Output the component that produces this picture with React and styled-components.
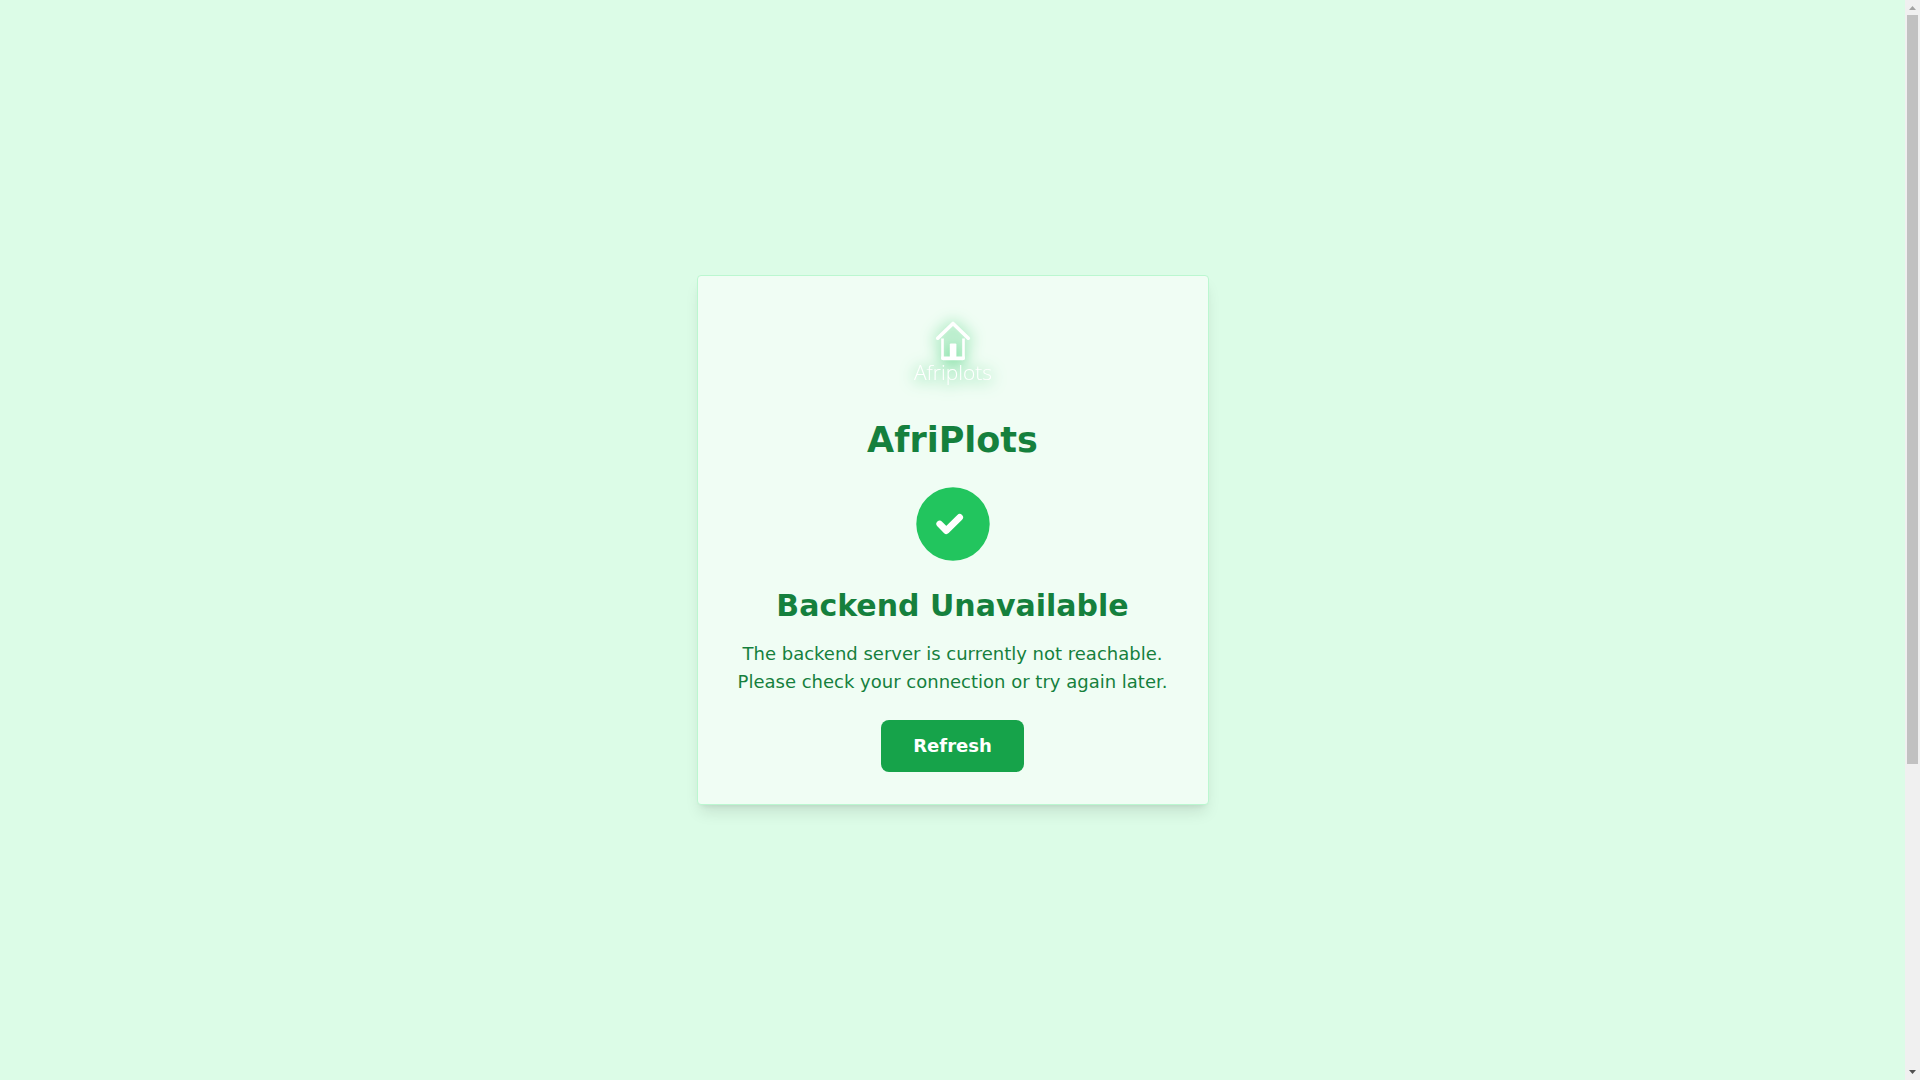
import React from 'react';
import styled, { createGlobalStyle } from 'styled-components';

const GlobalStyle = createGlobalStyle`
  * {
    box-sizing: border-box;
    margin: 0;
    padding: 0;
  }
  body {
    font-family: 'DejaVu Sans', sans-serif;
    background-color: #dcfce7;
    color: #15803d;
  }
`;

const PageStyles = styled.div`
  display: flex;
  min-height: 100vh;

  .page__screen {
    flex: 1;
    display: flex;
    align-items: center;
    justify-content: center;
  }
`;

const Scrollbar = styled.div`
  width: 15px;
  height: 100vh;
  display: flex;
  flex-direction: column;
  align-items: center;
  background-color: #f0f0f0;

  svg {
    width: 15px;
    height: 15px;
    flex-shrink: 0;
  }
  .scrollbar__track {
    flex: 1;
    width: 11px;
  }
  .scrollbar__thumb {
    height: 71.3%;
    background-color: #c1c1c1;
  }
`;

const Card = styled.main`
  width: 100%;
  max-width: 512px;
  padding: 32px;
  display: flex;
  flex-direction: column;
  align-items: center;
  text-align: center;
  background-color: #f0fdf4;
  border: 1px solid #bbf7d0;
  border-radius: 4px;
  box-shadow: 0 10px 15px -3px rgba(0, 0, 0, 0.1),
    0 4px 6px -4px rgba(0, 0, 0, 0.1);
`;

const Logo = styled.svg`
  width: 96px;
  height: 96px;
  margin-bottom: 16px;
  filter: drop-shadow(0 2px 8px #22c55e);
`;

const Title = styled.h1`
  font-size: 35px;
  line-height: 40px;
  font-weight: 700;
  margin-bottom: 24px;
`;

const StatusIcon = styled.svg`
  width: 80px;
  height: 80px;
  margin-bottom: 24px;
`;

const Heading = styled.h2`
  font-size: 30px;
  line-height: 36px;
  font-weight: 700;
  margin-bottom: 16px;
`;

const Message = styled.p`
  font-size: 18px;
  line-height: 28px;
  margin-bottom: 24px;
`;

const Button = styled.button`
  padding: 12px 32px;
  font-family: inherit;
  font-size: 18px;
  line-height: 28px;
  font-weight: 700;
  color: #fff;
  background-color: #16a34a;
  border: none;
  border-radius: 8px;
  cursor: pointer;
  &:hover {
    background-color: #15803d;
  }
`;

export default function App() {
  return (
    <>
      <GlobalStyle />
      <PageStyles>
        <div className="page__screen">
          <Card>
            <Logo viewBox="0 0 96 96" role="img" aria-label="Afriplots">
              <g fill="none" stroke="#fff" strokeLinejoin="round">
                <path
                  d="M32.7 30.2L48 15.5l15.3 14.7"
                  strokeWidth="3.6"
                  strokeLinecap="round"
                />
                <path d="M37.5 30.5v20h21v-20" strokeWidth="2.6" />
              </g>
              <path
                d="M36.2 48.5h23.6v1.8a2 2 0 0 1-2 2H38.2a2 2 0 0 1-2-2z"
                fill="#fff"
              />
              <rect x="44.8" y="35.5" width="6.6" height="15" rx="1" fill="#fff" />
              <text
                x="48"
                y="72"
                textAnchor="middle"
                fontFamily="'Open Sans', sans-serif"
                fontWeight="300"
                fontSize="21"
                fill="#fff"
              >
                Afriplots
              </text>
            </Logo>
            <Title>AfriPlots</Title>
            <StatusIcon viewBox="0 0 80 80" aria-hidden="true">
              <circle cx="40" cy="40" r="36.7" fill="#22c55e" />
              <path
                d="M26.7 40l6.6 6.7 13.4-13.4"
                fill="none"
                stroke="#fff"
                strokeWidth="6.7"
                strokeLinecap="round"
                strokeLinejoin="round"
              />
            </StatusIcon>
            <Heading>Backend Unavailable</Heading>
            <Message>
              The backend server is currently not reachable.
              <br />
              Please check your connection or try again later.
            </Message>
            <Button type="button" onClick={() => window.location.reload()}>
              Refresh
            </Button>
          </Card>
        </div>
        <Scrollbar aria-hidden="true">
          <svg viewBox="0 0 15 15">
            <path d="M4 10h7L7.5 6z" fill="#a3a3a3" />
          </svg>
          <div className="scrollbar__track">
            <div className="scrollbar__thumb" />
          </div>
          <svg viewBox="0 0 15 15">
            <path d="M4 5h7L7.5 9z" fill="#505050" />
          </svg>
        </Scrollbar>
      </PageStyles>
    </>
  );
}
